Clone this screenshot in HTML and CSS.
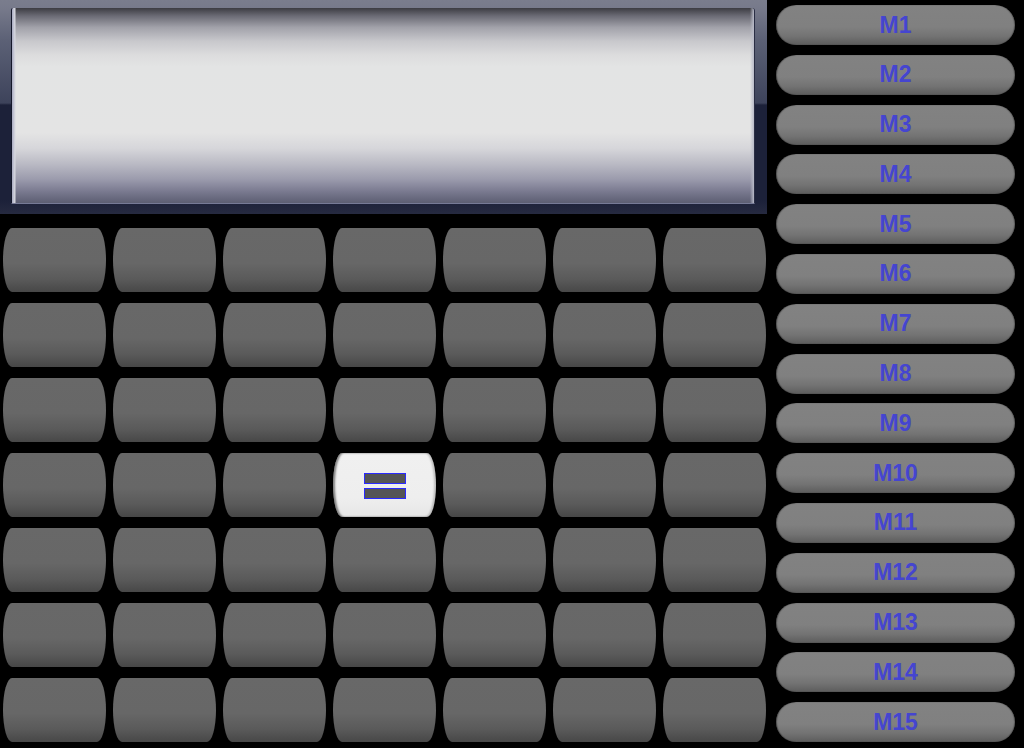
FILE: index.html
```html
<!DOCTYPE html>
<html>
<head>
<meta charset="utf-8">
<link rel="stylesheet" href="styles.css">
</head>
<body>
<div class="app">
  <div class="main">
    <div class="display">
      <div class="screen"></div>
    </div>
    <div class="keys">
      <div class="key"></div><div class="key"></div><div class="key"></div><div class="key"></div><div class="key"></div><div class="key"></div><div class="key"></div>
      <div class="key"></div><div class="key"></div><div class="key"></div><div class="key"></div><div class="key"></div><div class="key"></div><div class="key"></div>
      <div class="key"></div><div class="key"></div><div class="key"></div><div class="key"></div><div class="key"></div><div class="key"></div><div class="key"></div>
      <div class="key"></div><div class="key"></div><div class="key"></div>
      <div class="key key-eq"><div class="eq"><span class="eq-bar"></span><span class="eq-bar"></span></div></div>
      <div class="key"></div><div class="key"></div><div class="key"></div>
      <div class="key"></div><div class="key"></div><div class="key"></div><div class="key"></div><div class="key"></div><div class="key"></div><div class="key"></div>
      <div class="key"></div><div class="key"></div><div class="key"></div><div class="key"></div><div class="key"></div><div class="key"></div><div class="key"></div>
      <div class="key"></div><div class="key"></div><div class="key"></div><div class="key"></div><div class="key"></div><div class="key"></div><div class="key"></div>
    </div>
  </div>
  <div class="memory">
    <div class="mem">M1</div>
    <div class="mem">M2</div>
    <div class="mem">M3</div>
    <div class="mem">M4</div>
    <div class="mem">M5</div>
    <div class="mem">M6</div>
    <div class="mem">M7</div>
    <div class="mem">M8</div>
    <div class="mem">M9</div>
    <div class="mem">M10</div>
    <div class="mem">M11</div>
    <div class="mem">M12</div>
    <div class="mem">M13</div>
    <div class="mem">M14</div>
    <div class="mem">M15</div>
  </div>
</div>
</body>
</html>
```
FILE: styles.css
```css
html, body {
  margin: 0;
  padding: 0;
  background: #000;
}
body {
  width: 1024px;
  height: 748px;
  overflow: hidden;
  font-family: "Liberation Sans", Arial, sans-serif;
}
.app {
  display: flex;
  flex-direction: row;
  height: 748px;
}
.main {
  width: 767px;
  display: flex;
  flex-direction: column;
}
.display {
  height: 214px;
  box-sizing: border-box;
  padding: 8px 12px 10px 11px;
  background: linear-gradient(to bottom, #7a7d8d 0px, #777a8b 8px, #5c6176 40px, #3d435b 103px, #1c2139 105px, #1c2139 200px, #262a40 214px);
}
.screen {
  height: 100%;
  box-sizing: border-box;
  border-left: 1px solid #15182a;
  border-right: 1px solid #2a2e44;
  border-bottom: 1px solid #767a96;
  border-radius: 2px 3px 0 0;
  background:
    linear-gradient(to right, #a9abc2 0, #d8d9e0 3px, rgba(228,228,228,0) 4px, rgba(228,228,228,0) calc(100% - 4px), #b8bac8 100%),
    linear-gradient(to bottom, #3c3c42 0%, #6a6a74 4%, #a2a2aa 10%, #c8c8cc 17%, #dcdcdd 24%, #e3e4e4 30%, #e4e4e4 64%, #d6d6da 72%, #babac4 80%, #9a9aac 88%, #7a7a90 94%, #5c5e72 100%);
}
.keys {
  margin-top: 14px;
  padding-left: 3px;
  display: grid;
  grid-template-columns: repeat(7, 103px);
  grid-auto-rows: 64px;
  column-gap: 7px;
  row-gap: 11px;
}
.key {
  border-radius: 9px / 32px;
  background: linear-gradient(to bottom, #686868 0%, #676767 55%, #5a5a5a 80%, #474747 100%);
}
.key-eq {
  background: linear-gradient(to bottom, #f0f0f0 0%, #eeeeee 70%, #e6e6e6 100%);
  box-shadow: inset 2px 0 2px rgba(0,0,0,0.45), inset -2px 0 2px rgba(0,0,0,0.2);
  display: flex;
  align-items: center;
  justify-content: center;
}
.eq {
  display: flex;
  flex-direction: column;
  gap: 4px;
  margin-top: 1px;
}
.eq-bar {
  display: block;
  width: 40px;
  height: 9px;
  background: #555555;
  border: 1px solid #2a2aff;
}
.memory {
  margin-left: 9px;
  width: 239px;
  padding-top: 5px;
  display: flex;
  flex-direction: column;
  gap: 9.8px;
}
.mem {
  height: 40px;
  box-sizing: border-box;
  border-radius: 20px;
  background: linear-gradient(to bottom, #828282 0%, #808080 55%, #737373 78%, #5c5c5c 100%);
  box-shadow: inset 1px 0 1px rgba(0,0,0,0.35), inset -1px 0 1px rgba(0,0,0,0.25);
  display: flex;
  align-items: center;
  justify-content: center;
  color: #4545d0;
  font-weight: bold;
  font-size: 23px;
  line-height: 1;
}
```
